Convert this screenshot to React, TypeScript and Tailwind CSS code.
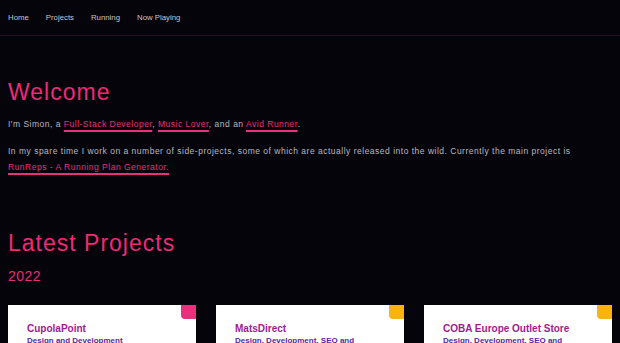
import React from "react";

interface Project {
  title: string;
  subtitle: string;
  corner: string;
}

const projects: Project[] = [
  { title: "CupolaPoint", subtitle: "Design and Development", corner: "bg-[#e8307c]" },
  { title: "MatsDirect", subtitle: "Design, Development, SEO and", corner: "bg-[#fbb40c]" },
  { title: "COBA Europe Outlet Store", subtitle: "Design, Development, SEO and", corner: "bg-[#fbb40c]" },
];

const navItems = ["Home", "Projects", "Running", "Now Playing"];

const Link: React.FC<{ children: React.ReactNode }> = ({ children }) => (
  <a
    href="#"
    className="text-[#e8307c] underline decoration-[#e8307c] decoration-2 underline-offset-[3px]"
  >
    {children}
  </a>
);

const App: React.FC = () => {
  return (
    <div
      className="min-h-[343px] bg-[#05040b] text-[#b8b8c0]"
      style={{ fontFamily: '"Liberation Sans", Arial, sans-serif' }}
    >
      <nav className="h-[36px] flex items-center gap-[17px] px-2 border-b border-[#2a0f24]">
        {navItems.map((item) => (
          <span key={item} className="text-[7.8px] text-[#c4c4cc]">
            {item}
          </span>
        ))}
      </nav>

      <main className="px-2">
        <h1 className="mt-[42px] text-[23px] leading-[28px] tracking-[1px] text-[#ec2a77]">
          Welcome
        </h1>
        <p className="mt-[10px] text-[8.5px] leading-[16px] tracking-[0.5px]">
          I'm Simon, a <Link>Full-Stack Developer</Link>, <Link>Music Lover</Link>, and an{" "}
          <Link>Avid Runner</Link>.
        </p>
        <p className="mt-[11px] max-w-[585px] text-[8.5px] leading-[16px] tracking-[0.5px]">
          In my spare time I work on a number of side-projects, some of which are actually
          released into the wild. Currently the main project is{" "}
          <Link>RunReps - A Running Plan Generator.</Link>
        </p>

        <h2 className="mt-[54px] text-[23px] leading-[28px] tracking-[1px] text-[#ec2a77]">
          Latest Projects
        </h2>
        <h3 className="mt-[10px] text-[14px] leading-[18px] tracking-[0.5px] text-[#ec2a77]">
          2022
        </h3>

        <div className="mt-[20px] grid grid-cols-3 gap-5">
          {projects.map((p) => (
            <div key={p.title} className="relative bg-white h-[60px] px-[19px] pt-[17px]">
              <div className={`absolute top-0 right-0 w-[15px] h-[14px] rounded-bl-[4px] ${p.corner}`} />
              <div className="text-[10px] font-bold leading-[13px] text-[#a4198f]">{p.title}</div>
              <div className="text-[8px] font-bold leading-[12px] text-[#5a1f9e]">{p.subtitle}</div>
            </div>
          ))}
        </div>
      </main>
    </div>
  );
};

export default App;
